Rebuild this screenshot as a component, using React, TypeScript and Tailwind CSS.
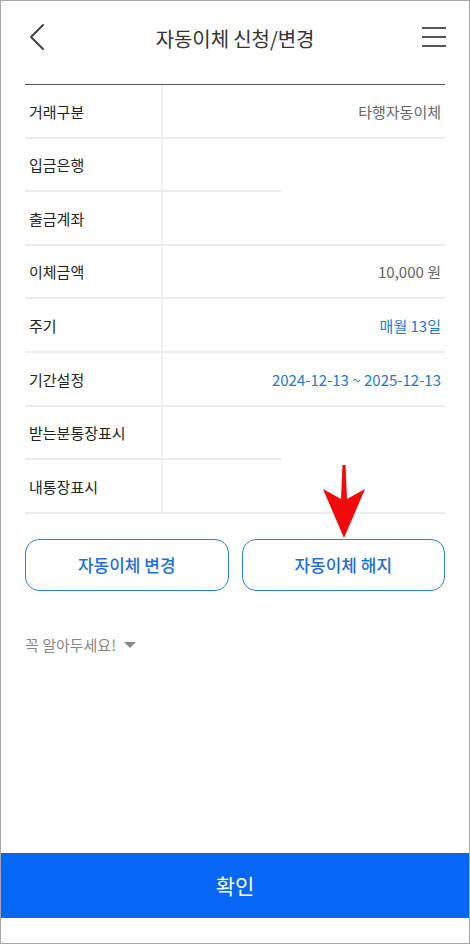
import React from 'react';

type Row = { label: string; value?: string; tone?: 'gray' | 'blue'; shortLine?: boolean };

const rows: Row[] = [
  { label: '거래구분', value: '타행자동이체', tone: 'gray' },
  { label: '입금은행', shortLine: true },
  { label: '출금계좌' },
  { label: '이체금액', value: '10,000 원', tone: 'gray' },
  { label: '주기', value: '매월 13일', tone: 'blue' },
  { label: '기간설정', value: '2024-12-13 ~ 2025-12-13', tone: 'blue' },
  { label: '받는분통장표시', shortLine: true },
  { label: '내통장표시' },
];

function BackIcon() {
  return (
    <svg width="16" height="28" viewBox="0 0 16 28" fill="none">
      <path d="M14 2 L2 14 L14 26" stroke="#444" strokeWidth="2" strokeLinecap="round" strokeLinejoin="round" />
    </svg>
  );
}

function MenuIcon() {
  return (
    <svg width="26" height="22" viewBox="0 0 26 22" fill="none">
      <path d="M1 2 H25 M1 11 H25 M1 20 H25" stroke="#555" strokeWidth="2" />
    </svg>
  );
}

function PointerArrow() {
  return (
    <svg width="46" height="78" viewBox="0 0 46 78" className="absolute left-[320px] top-[461px]">
      <polygon
        points="21.5,3 24.5,3 26,37 44,27 23,76 2,27 20,37"
        fill="#f00a0a"
      />
    </svg>
  );
}

export default function App() {
  const font = { fontFamily: '"Noto Sans CJK KR", "Noto Sans", sans-serif' };

  return (
    <div
      className="relative w-[470px] h-[944px] bg-white border border-[#a8a8a8] flex flex-col overflow-hidden"
      style={font}
    >
      {/* Top navigation bar */}
      <header className="h-[76px] flex items-center justify-between px-[28px] shrink-0">
        <button className="w-[20px] flex items-center -mt-[4px]">
          <BackIcon />
        </button>
        <h1 className="text-[20px] text-[#333] tracking-[-0.1px]">자동이체 신청/변경</h1>
        <button className="flex items-center -mr-[6px] -mt-[4px]">
          <MenuIcon />
        </button>
      </header>

      {/* Transfer detail table */}
      <div className="mx-[24px] mt-[7px] border-t border-[#555]">
        {rows.map((r) => (
          <div key={r.label} className="relative grid grid-cols-[138px_1fr] h-[53.6px]">
            <div className="flex items-center pl-[4px] text-[15px] text-[#222] border-r-2 border-[#f2f2f2]">
              {r.label}
            </div>
            <div
              className={
                'flex items-center justify-end pr-[4px] text-[15px] ' +
                (r.tone === 'blue' ? 'text-[#1f78d1]' : 'text-[#666]')
              }
            >
              {r.value}
            </div>
            <div
              className={
                'absolute left-0 bottom-0 h-[2px] bg-[#ececec] ' + (r.shortLine ? 'w-[256px]' : 'w-full')
              }
            />
          </div>
        ))}
      </div>

      {/* Action buttons */}
      <div className="mx-[24px] mt-[25px] grid grid-cols-2 gap-[13px]">
        <button className="h-[52px] rounded-[14px] border-[1.5px] border-[#2a7fe0] text-[17px] font-medium text-[#1f6fd6]">
          자동이체 변경
        </button>
        <button className="h-[52px] rounded-[14px] border-[1.5px] border-[#2a7fe0] text-[17px] font-medium text-[#1f6fd6]">
          자동이체 해지
        </button>
      </div>

      <div className="mx-[24px] mt-[43px] flex items-center gap-[8px] text-[15px] text-[#888]">
        <span>꼭 알아두세요!</span>
        <svg width="12" height="8" viewBox="0 0 12 8">
          <polygon points="0,1 12,1 6,7" fill="#888" />
        </svg>
      </div>

      <div className="flex-1" />

      <button className="h-[65px] w-full bg-[#0667f5] text-white text-[21px] shrink-0">확인</button>
      <div className="h-[25px] shrink-0" />

      <PointerArrow />
    </div>
  );
}
